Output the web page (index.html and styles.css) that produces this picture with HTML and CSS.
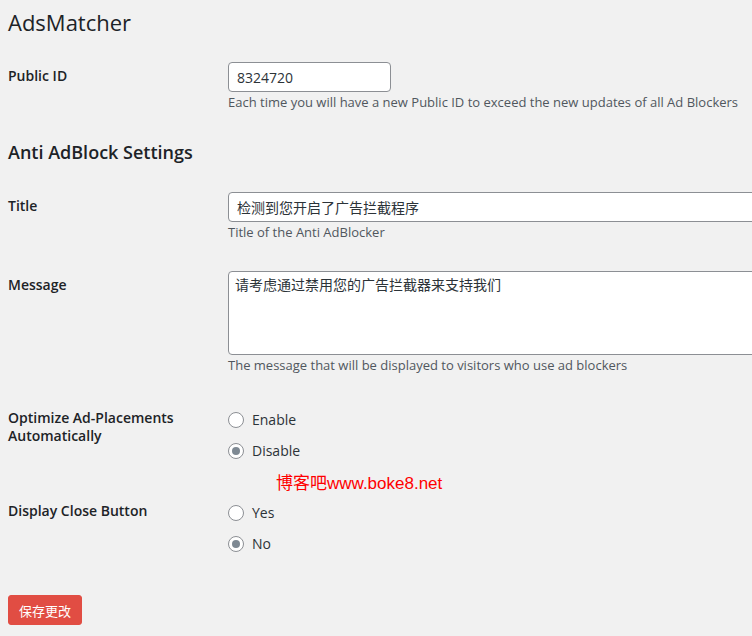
FILE: index.html
```html
<!DOCTYPE html>
<html lang="zh-CN">
<head>
    <meta charset="UTF-8">
    <meta name="viewport" content="width=device-width, initial-scale=1.0">
    <title>AdsMatcher</title>
    <link rel="stylesheet" href="styles.css">
</head>
<body>
    <div class="wrap">
        <h1>AdsMatcher</h1>

        <form>
            <table class="form-table">
                <tr>
                    <th><label for="public-id">Public ID</label></th>
                    <td>
                        <input type="text" id="public-id" class="small-text" value="8324720">
                        <p class="description">Each time you will have a new Public ID to exceed the new updates of all Ad Blockers</p>
                    </td>
                </tr>
            </table>

            <h2>Anti AdBlock Settings</h2>

            <table class="form-table">
                <tr>
                    <th><label for="ab-title">Title</label></th>
                    <td>
                        <input type="text" id="ab-title" class="large-text" value="检测到您开启了广告拦截程序">
                        <p class="description">Title of the Anti AdBlocker</p>
                    </td>
                </tr>
                <tr>
                    <th><label for="ab-message">Message</label></th>
                    <td>
                        <textarea id="ab-message" class="large-text">请考虑通过禁用您的广告拦截器来支持我们</textarea>
                        <p class="description">The message that will be displayed to visitors who use ad blockers</p>
                    </td>
                </tr>
                <tr>
                    <th>Optimize Ad-Placements Automatically</th>
                    <td>
                        <fieldset>
                            <label class="option"><span class="radio"></span>Enable</label>
                            <label class="option"><span class="radio checked"></span>Disable</label>
                        </fieldset>
                    </td>
                </tr>
                <tr>
                    <th>Display Close Button</th>
                    <td>
                        <fieldset>
                            <label class="option"><span class="radio"></span>Yes</label>
                            <label class="option"><span class="radio checked"></span>No</label>
                        </fieldset>
                    </td>
                </tr>
            </table>

            <p class="submit">
                <button type="button" class="button-primary">保存更改</button>
            </p>
        </form>

        <div class="watermark">博客吧www.boke8.net</div>
    </div>
</body>
</html>
```

FILE: styles.css
```css
* {
    box-sizing: border-box;
}

html, body {
    margin: 0;
    height: 100%;
    overflow: hidden;
}

body {
    background: #f1f1f1;
    color: #1d2327;
    font-family: "Open Sans", "Noto Sans CJK SC", sans-serif;
    font-size: 13px;
}

.wrap {
    position: relative;
    width: 920px;
    padding: 0 8px;
}

h1 {
    margin: 0;
    padding-top: 7px;
    font-size: 22px;
    font-weight: 400;
    line-height: 30px;
}

.form-table {
    width: 100%;
    table-layout: fixed;
    border-collapse: collapse;
    margin-top: 10px;
}

h2 + .form-table {
    margin-top: 0;
}

.form-table th {
    width: 210px;
    padding: 20px 10px 20px 0;
    text-align: left;
    vertical-align: top;
    font-size: 14px;
    font-weight: 600;
    line-height: 18px;
}

.form-table td {
    padding: 15px 10px;
    vertical-align: top;
}

h2 {
    margin: 14px 0 13px;
    font-size: 18px;
    font-weight: 600;
    line-height: 24px;
}

input[type="text"],
textarea {
    display: block;
    margin: 0;
    border: 1px solid #8c8f94;
    border-radius: 4px;
    background: #fff;
    color: #2c3338;
    font-family: "Open Sans", "Noto Sans CJK SC", sans-serif;
    font-size: 14px;
}

input[type="text"] {
    height: 30px;
    padding: 0 8px;
}

.small-text {
    width: 163px;
}

.large-text {
    width: 600px;
}

textarea {
    height: 84px;
    padding: 3px 6px;
    line-height: 20px;
    resize: none;
}

.description {
    margin: 2px 0 0;
    color: #50575e;
    line-height: 17px;
}

fieldset {
    margin: 0;
    padding: 0 0 1px;
    border: 0;
}

.option {
    display: flex;
    align-items: center;
    padding: 7px 0 6px;
    color: #2c3338;
    font-size: 14px;
    line-height: 18px;
}

.radio {
    width: 16px;
    height: 16px;
    margin-right: 8px;
    border: 1px solid #8c8f94;
    border-radius: 50%;
    background: #fff;
    display: flex;
    align-items: center;
    justify-content: center;
}

.radio.checked::before {
    content: "";
    width: 8px;
    height: 8px;
    border-radius: 50%;
    background: #7e8993;
}

.submit {
    margin: 20px 0 0;
}

.button-primary {
    height: 30px;
    padding: 0 10px;
    border: 1px solid #e14d43;
    border-radius: 3px;
    background: #e14d43;
    color: #fff;
    font-family: "Open Sans", "Noto Sans CJK SC", sans-serif;
    font-size: 13px;
    cursor: pointer;
}

.watermark {
    position: absolute;
    left: 276px;
    top: 474px;
    color: #ff0000;
    font-family: "Liberation Sans", "Noto Sans CJK SC", sans-serif;
    font-size: 17px;
    line-height: 20px;
}
```
